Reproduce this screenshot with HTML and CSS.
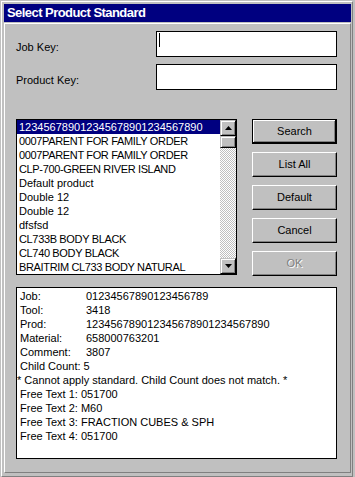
FILE: index.html
```html
<!DOCTYPE html>
<html>
<head>
<meta charset="utf-8">
<link rel="stylesheet" href="styles.css">
</head>
<body>
<div class="window">
  <div class="frame">
    <div class="titlebar">Select Product Standard</div>
    <div class="panel">
      <div class="fields">
        <div class="lbl">Job Key:</div>
        <div class="edit"><span class="caret"></span></div>
        <div class="lbl">Product Key:</div>
        <div class="edit"></div>
      </div>
      <div class="main">
        <div class="listbox">
          <ul class="items">
            <li class="sel">123456789012345678901234567890</li>
            <li class="caps">0007PARENT FOR FAMILY ORDER</li>
            <li class="caps">0007PARENT FOR FAMILY ORDER</li>
            <li class="caps">CLP-700-GREEN RIVER ISLAND</li>
            <li>Default product</li>
            <li>Double 12</li>
            <li>Double 12</li>
            <li>dfsfsd</li>
            <li class="caps">CL733B BODY BLACK</li>
            <li class="caps">CL740 BODY BLACK</li>
            <li class="caps">BRAITRIM CL733 BODY NATURAL</li>
          </ul>
          <div class="vscroll">
            <div class="sbtn"><svg width="7" height="4" viewBox="0 0 7 4"><polygon points="3.5,0 7,4 0,4" fill="#000"/></svg></div>
            <div class="thumb"></div>
            <div class="track"></div>
            <div class="sbtn"><svg width="7" height="4" viewBox="0 0 7 4"><polygon points="0,0 7,0 3.5,4" fill="#000"/></svg></div>
          </div>
        </div>
        <div class="buttons">
          <div class="btn default">Search</div>
          <div class="btn">List All</div>
          <div class="btn">Default</div>
          <div class="btn">Cancel</div>
          <div class="btn disabled">OK</div>
        </div>
      </div>
      <div class="info">
        <div class="line ind"><span class="k">Job:</span>01234567890123456789</div>
        <div class="line ind"><span class="k">Tool:</span>3418</div>
        <div class="line ind"><span class="k">Prod:</span>123456789012345678901234567890</div>
        <div class="line ind"><span class="k">Material:</span>658000763201</div>
        <div class="line ind"><span class="k">Comment:</span>3807</div>
        <div class="line ind">Child Count: 5</div>
        <div class="line">* Cannot apply standard. Child Count does not match. *</div>
        <div class="line ind">Free Text 1: 051700</div>
        <div class="line ind">Free Text 2: M60</div>
        <div class="line ind">Free Text 3: FRACTION CUBES &amp; SPH</div>
        <div class="line ind">Free Text 4: 051700</div>
      </div>
    </div>
  </div>
</div>
</body>
</html>
```

FILE: styles.css
```css
html, body {
  margin: 0;
  padding: 0;
  background: #c0c0c0;
}
body {
  font-family: "Liberation Sans", Arial, sans-serif;
  font-size: 11px;
  color: #000;
}
.window {
  width: 355px;
  height: 477px;
  box-sizing: border-box;
  padding: 0 2px 1px 1px;
  background: #c0c0c0;
}
.frame {
  box-sizing: border-box;
  height: 476px;
  border-top: 1px solid #fff;
  border-left: 1px solid #fff;
  border-right: 1px solid #808080;
  border-bottom: 1px solid #808080;
  padding: 2px 1px 2px 2px;
  margin-top: 1px;
}
.titlebar {
  height: 18px;
  line-height: 18px;
  margin-bottom: 1px;
  background: #000080;
  color: #fff;
  font-weight: bold;
  font-size: 13px;
  letter-spacing: -0.55px;
  padding-left: 3px;
  white-space: nowrap;
}
.panel {
  box-sizing: border-box;
  height: 450px;
  border-top: 1px solid #fff;
  border-left: 1px solid #fff;
  border-right: 1px solid #808080;
  border-bottom: 1px solid #808080;
  padding: 7px 13px 0 11px;
}
.fields {
  display: grid;
  grid-template-columns: 1fr 181px;
  grid-auto-rows: 26px;
  row-gap: 7px;
}
.lbl {
  line-height: 13px;
  padding-top: 10px;
}
.edit {
  box-sizing: border-box;
  background: #fff;
  border: 1px solid #000;
  padding: 1px 1px;
}
.caret {
  display: block;
  width: 1px;
  height: 14px;
  margin-left: 1px;
  background: #000;
}
.main {
  display: flex;
  gap: 15px;
  margin-top: 29px;
}
.listbox {
  box-sizing: border-box;
  width: 221px;
  height: 156px;
  border: 1px solid #000;
  background: #fff;
  display: flex;
}
.items {
  list-style: none;
  margin: 0;
  padding: 0;
  flex: 1;
  overflow: hidden;
}
.items li {
  height: 14px;
  line-height: 14px;
  padding-left: 2px;
  white-space: nowrap;
}
.items li.caps {
  letter-spacing: -0.35px;
}
.items li.sel {
  background: #000080;
  color: #fff;
}
.vscroll {
  width: 16px;
  display: flex;
  flex-direction: column;
}
.sbtn, .thumb {
  box-sizing: border-box;
  width: 16px;
  background: #c0c0c0;
  border: 1px solid;
  border-color: #c0c0c0 #000 #000 #c0c0c0;
  box-shadow: inset 1px 1px #fff, inset -1px -1px #808080;
}
.sbtn {
  height: 16px;
  display: flex;
  align-items: center;
  justify-content: center;
}
.sbtn svg {
  display: block;
}
.thumb {
  height: 12px;
}
.track {
  flex: 1;
  background-image: conic-gradient(#fff 25%, #c0c0c0 0 50%, #fff 0 75%, #c0c0c0 0);
  background-size: 2px 2px;
}
.buttons {
  display: flex;
  flex-direction: column;
  gap: 8px;
}
.btn {
  box-sizing: border-box;
  width: 85px;
  height: 25px;
  line-height: 23px;
  text-align: center;
  background: #c0c0c0;
  border: 1px solid;
  border-color: #fff #000 #000 #fff;
  box-shadow: inset -1px -1px #808080;
}
.btn.default {
  border: 1px solid #000;
  box-shadow: inset -1px -1px #000, inset 1px 1px #fff, inset -2px -2px #808080;
}
.btn.disabled {
  color: #808080;
  text-shadow: 1px 1px #fff;
}
.info {
  box-sizing: border-box;
  margin-top: 11px;
  height: 172px;
  border: 1px solid #000;
  background: #fff;
  padding-top: 1px;
}
.line {
  line-height: 14px;
  height: 14px;
  white-space: nowrap;
}
.line.ind {
  padding-left: 3px;
}
.k {
  display: inline-block;
  width: 66px;
}
```
